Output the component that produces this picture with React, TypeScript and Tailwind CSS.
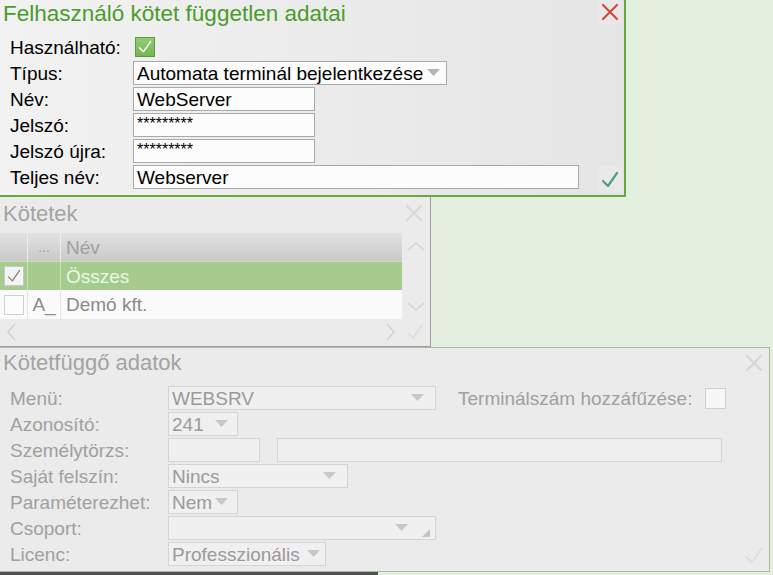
import React from 'react';

const font = { fontFamily: '"Liberation Sans", Arial, sans-serif' };

function Arrow({ color = '#b8b8b8' }: { color?: string }) {
  return (
    <svg width="13" height="8" viewBox="0 0 13 8" className="shrink-0">
      <path d="M0 0 H13 L6.5 7 Z" fill={color} />
    </svg>
  );
}

function CloseX({ color, size = 18 }: { color: string; size?: number }) {
  return (
    <svg width={size} height={size} viewBox="0 0 18 18">
      <path d="M2 2 L16 16 M16 2 L2 16" stroke={color} strokeWidth="2.2" strokeLinecap="round" />
    </svg>
  );
}

function Check({ color, size = 20, width = 2.2 }: { color: string; size?: number; width?: number }) {
  return (
    <svg width={size} height={size} viewBox="0 0 20 20">
      <path d="M3 11 L8 16 L17 3" stroke={color} strokeWidth={width} fill="none" strokeLinecap="round" strokeLinejoin="round" />
    </svg>
  );
}

function Chevron({ dir }: { dir: 'up' | 'down' | 'left' | 'right' }) {
  const d = {
    up: 'M2 13 L10 6 L18 13',
    down: 'M2 6 L10 13 L18 6',
    left: 'M13 2 L6 10 L13 18',
    right: 'M7 2 L14 10 L7 18',
  }[dir];
  return (
    <svg width="20" height="20" viewBox="0 0 20 20">
      <path d={d} stroke="#d2d2d2" strokeWidth="1.6" fill="none" />
    </svg>
  );
}

function Row({ label, children, labelW, labelColor }: { label: string; children?: React.ReactNode; labelW: string; labelColor: string }) {
  return (
    <div className="flex items-center h-[26px]">
      <div className={`${labelW} pl-[10px] text-[19px] leading-none ${labelColor}`}>{label}</div>
      {children}
    </div>
  );
}

function Field({ w, children, dim }: { w: string; children?: React.ReactNode; dim?: boolean }) {
  return (
    <div
      className={`${w} h-[24px] flex items-center px-[3px] text-[19px] leading-none border ${
        dim ? 'bg-[#f0f0f0] border-[#d4d4d4] text-[#9a9a9a]' : 'bg-[#fcfcfc] border-[#a9a9a9] text-black'
      }`}
    >
      {children}
    </div>
  );
}

export default function App() {
  return (
    <div className="relative w-[773px] h-[575px] overflow-hidden bg-[#e3f0df]" style={font}>
      {/* Dark window peeking at the bottom */}
      <div className="absolute left-0 top-[572px] w-[378px] h-[3px] bg-[#505050]" />

      {/* Kötetfüggő adatok */}
      <div className="absolute left-0 top-[347px] w-[770px] h-[225px] bg-[#ebebeb] border border-l-0 border-[#a9bba0]">
        <div className="flex items-start justify-between h-[30px]">
          <div className="pl-[3px] pt-[4px] text-[22px] leading-none text-[#a3a3a3]">Kötetfüggő adatok</div>
          <div className="pt-[6px] pr-[6px]"><CloseX color="#d6d6d6" /></div>
        </div>
        <div className="flex flex-col pt-[7px]">
          <Row label="Menü:" labelW="w-[168px]" labelColor="text-[#a0a0a0]">
            <Field w="w-[268px]" dim>
              <span className="flex-1">WEBSRV</span>
              <span className="pr-[8px]"><Arrow color="#c8c8c8" /></span>
            </Field>
            <div className="ml-[22px] text-[19px] leading-none text-[#a0a0a0]">Terminálszám hozzáfűzése:</div>
            <div className="ml-[13px] w-[21px] h-[21px] bg-[#f7f7f7] border border-[#d0d0d0]" />
          </Row>
          <Row label="Azonosító:" labelW="w-[168px]" labelColor="text-[#a0a0a0]">
            <Field w="w-[70px]" dim>
              <span className="flex-1">241</span>
              <span className="pr-[6px]"><Arrow color="#c8c8c8" /></span>
            </Field>
          </Row>
          <Row label="Személytörzs:" labelW="w-[168px]" labelColor="text-[#a0a0a0]">
            <Field w="w-[92px]" dim />
            <div className="ml-[17px]"><Field w="w-[445px]" dim /></div>
          </Row>
          <Row label="Saját felszín:" labelW="w-[168px]" labelColor="text-[#a0a0a0]">
            <Field w="w-[180px]" dim>
              <span className="flex-1">Nincs</span>
              <span className="pr-[8px]"><Arrow color="#c8c8c8" /></span>
            </Field>
          </Row>
          <Row label="Paraméterezhet:" labelW="w-[168px]" labelColor="text-[#a0a0a0]">
            <Field w="w-[70px]" dim>
              <span className="flex-1">Nem</span>
              <span className="pr-[6px]"><Arrow color="#c8c8c8" /></span>
            </Field>
          </Row>
          <Row label="Csoport:" labelW="w-[168px]" labelColor="text-[#a0a0a0]">
            <Field w="w-[268px]" dim>
              <span className="flex-1" />
              <span className="pr-[14px]"><Arrow color="#c8c8c8" /></span>
              <svg width="8" height="8" viewBox="0 0 8 8" className="self-end mb-[2px] mr-[2px]">
                <path d="M8 0 V8 H0 Z" fill="#c4c4c4" />
              </svg>
            </Field>
          </Row>
          <Row label="Licenc:" labelW="w-[168px]" labelColor="text-[#a0a0a0]">
            <Field w="w-[158px]" dim>
              <span className="flex-1 whitespace-nowrap">Professzionális</span>
              <span className="pr-[2px]"><Arrow color="#c8c8c8" /></span>
            </Field>
          </Row>
        </div>
        <div className="absolute right-[4px] bottom-[4px]"><Check color="#dcdcdc" size={22} width={1.4} /></div>
      </div>

      {/* Kötetek */}
      <div className="absolute left-0 top-[197px] w-[431px] h-[150px] bg-[#ebebeb] border-r border-b border-[#a0a0a0]">
        <div className="flex items-start justify-between h-[36px]">
          <div className="pl-[3px] pt-[6px] text-[22px] leading-none text-[#a3a3a3]">Kötetek</div>
          <div className="pt-[7px] pr-[7px]"><CloseX color="#d8d8d8" /></div>
        </div>
        <div className="flex">
          <div className="w-[402px] flex flex-col">
            <div className="flex h-[28px] bg-gradient-to-b from-[#e2e2e2] to-[#c9c9c9] text-[#a0a0a0]">
              <div className="w-[28px] border-r border-[#ececec]" />
              <div className="w-[33px] border-r border-[#ececec] flex items-center justify-center text-[14px]">...</div>
              <div className="flex-1 flex items-center pl-[5px] text-[19px] leading-none">Név</div>
            </div>
            <div className="flex h-[29px] bg-[#a5cc8e] border-t border-[#c8e0b8]">
              <div className="w-[28px] border-r border-[#c4dfb2] flex items-center justify-center">
                <div className="w-[20px] h-[20px] bg-[#f4f4f4] border border-[#c8c8c8] flex items-center justify-center">
                  <Check color="#7a7a7a" size={16} width={1.5} />
                </div>
              </div>
              <div className="w-[33px] border-r border-[#c4dfb2]" />
              <div className="flex-1 flex items-center pl-[5px] text-[19px] leading-none text-[#ecf7e4]">Összes</div>
            </div>
            <div className="flex h-[29px] bg-[#fafafa]">
              <div className="w-[28px] border-r border-[#e4e4e4] flex items-center justify-center">
                <div className="w-[20px] h-[20px] bg-[#fcfcfc] border border-[#d0d0d0]" />
              </div>
              <div className="w-[33px] border-r border-[#e4e4e4] flex items-center justify-center text-[19px] leading-none text-[#8a8a8a]">A_</div>
              <div className="flex-1 flex items-center pl-[5px] text-[19px] leading-none text-[#8a8a8a]">Demó kft.</div>
            </div>
          </div>
          <div className="flex-1 flex flex-col items-center justify-between pt-[4px] pb-[2px] h-[86px]">
            <Chevron dir="up" />
            <Chevron dir="down" />
          </div>
        </div>
        <div className="flex items-center h-[26px] pl-[2px]">
          <Chevron dir="left" />
          <div className="flex-1" />
          <Chevron dir="right" />
          <div className="ml-[5px] mr-[5px]"><Check color="#dcdcdc" size={20} width={1.4} /></div>
        </div>
      </div>

      {/* Felhasználó kötet független adatai */}
      <div className="absolute left-0 top-0 w-[626px] h-[197px] bg-gradient-to-r from-[#f2f2f2] to-[#e5e5e5] border-r-2 border-b-2 border-[#69a83d]">
        <div className="flex items-start justify-between h-[34px]">
          <div className="pl-[3px] pt-[3px] text-[22.5px] leading-none text-[#4b9c2c]">Felhasználó kötet független adatai</div>
          <div className="w-[24px] h-[24px] mr-[2px] bg-[#e8e8e8] flex items-center justify-center">
            <CloseX color="#d6493a" size={18} />
          </div>
        </div>
        <div className="flex flex-col">
          <Row label="Használható:" labelW="w-[135px]" labelColor="text-black">
            <div className="w-[20px] h-[20px] bg-gradient-to-b from-[#92cd72] to-[#74b552] border border-[#5c9a3c] flex items-center justify-center">
              <Check color="#ffffff" size={16} width={1.8} />
            </div>
          </Row>
          <Row label="Típus:" labelW="w-[133px]" labelColor="text-black">
            <Field w="w-[314px]">
              <span className="flex-1 whitespace-nowrap">Automata terminál bejelentkezése</span>
              <span className="pr-[3px]"><Arrow color="#b4b4b4" /></span>
            </Field>
          </Row>
          <Row label="Név:" labelW="w-[133px]" labelColor="text-black">
            <Field w="w-[182px]">WebServer</Field>
          </Row>
          <Row label="Jelszó:" labelW="w-[133px]" labelColor="text-black">
            <Field w="w-[182px]"><span className="self-start pt-[2px] text-[16px]">*********</span></Field>
          </Row>
          <Row label="Jelszó újra:" labelW="w-[133px]" labelColor="text-black">
            <Field w="w-[182px]"><span className="self-start pt-[2px] text-[16px]">*********</span></Field>
          </Row>
          <Row label="Teljes név:" labelW="w-[133px]" labelColor="text-black">
            <Field w="w-[446px]">Webserver</Field>
          </Row>
        </div>
        <div className="absolute right-[2px] bottom-[2px] w-[24px] h-[26px] bg-[#e9e9e9] flex items-center justify-center">
          <Check color="#4ea27c" size={20} width={2.2} />
        </div>
      </div>
    </div>
  );
}
